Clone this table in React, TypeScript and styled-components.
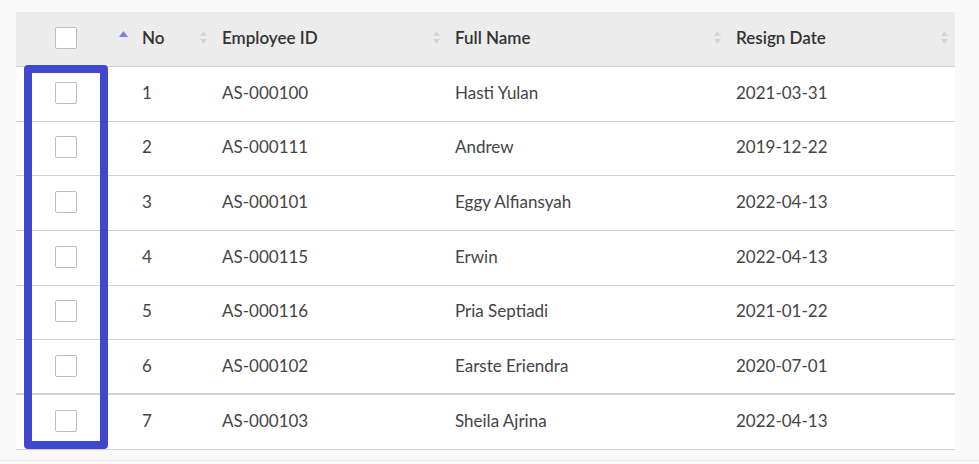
import React from "react";
import styled, { createGlobalStyle } from "styled-components";

const Global = createGlobalStyle`
  html, body { margin: 0; padding: 0; background: #f9f9f9; }
  body { font-family: Lato, "Open Sans", sans-serif; }
`;

const COLS = "100px 80px 233px 281px 1fr";

const Page = styled.div`
  width: 979px;
  height: 461px;
  box-sizing: border-box;
  padding: 12px 24px 0 16px;
  border-bottom: 1px solid #e8e8e8;
`;

const Table = styled.div`
  position: relative;
  width: 939px;
  background: #fff;
`;

const HeaderRow = styled.div`
  display: grid;
  grid-template-columns: ${COLS};
  height: 55px;
  box-sizing: border-box;
  background: #ececec;
  border-bottom: 1px solid #cfcfcf;
  align-items: center;
`;

const Row = styled.div<{ $thick?: boolean }>`
  display: grid;
  grid-template-columns: ${COLS};
  height: 54.67px;
  box-sizing: border-box;
  border-bottom: ${(p) => (p.$thick ? "2px" : "1px")} solid #d2d2d2;
  align-items: center;
`;

const CheckCell = styled.div`
  display: flex;
  justify-content: center;
  align-items: center;
`;

const Checkbox = styled.span`
  display: block;
  width: 22px;
  height: 22px;
  box-sizing: border-box;
  border: 1px solid #bdbdbd;
  border-radius: 2px;
  background: #fff;
  margin-top: -2px;
`;

const HeadCell = styled.div<{ $last?: boolean }>`
  display: flex;
  align-items: center;
  padding-left: 3px;
  padding-right: ${(p) => (p.$last ? "6px" : "0")};
  padding-bottom: 3px;
  box-sizing: border-box;
  font-size: 17px;
  font-weight: 600;
  color: #333;
  height: 100%;
`;

const Label = styled.span`
  margin-left: 14px;
  flex: 1;
  white-space: nowrap;
`;

const Cell = styled.div`
  padding-left: 26px;
  padding-bottom: 3px;
  font-size: 17px;
  color: #444;
  white-space: nowrap;
`;

const Highlight = styled.div`
  position: absolute;
  left: 8px;
  top: 53px;
  width: 84px;
  height: 384px;
  box-sizing: border-box;
  border: 8px solid #3f48cc;
  border-radius: 4px;
  pointer-events: none;
`;

const SortIcon = ({ active }: { active?: boolean }) => (
  <svg width="9" height="17" viewBox="0 0 9 17" style={{ flex: "none" }}>
    {active ? (
      <path d="M4.5 2 L9 8 L0 8 Z" fill="#7b80e6" />
    ) : (
      <>
        <path d="M4.5 2 L8 7 L1 7 Z" fill="#d4d4d4" />
        <path d="M4.5 15 L8 10 L1 10 Z" fill="#d4d4d4" />
      </>
    )}
  </svg>
);

const data = [
  ["1", "AS-000100", "Hasti Yulan", "2021-03-31"],
  ["2", "AS-000111", "Andrew", "2019-12-22"],
  ["3", "AS-000101", "Eggy Alfiansyah", "2022-04-13"],
  ["4", "AS-000115", "Erwin", "2022-04-13"],
  ["5", "AS-000116", "Pria Septiadi", "2021-01-22"],
  ["6", "AS-000102", "Earste Eriendra", "2020-07-01"],
  ["7", "AS-000103", "Sheila Ajrina", "2022-04-13"],
];

export default function App() {
  return (
    <>
      <Global />
      <Page>
        <Table>
          <HeaderRow>
            <CheckCell>
              <Checkbox />
            </CheckCell>
            <HeadCell>
              <SortIcon active />
              <Label>No</Label>
            </HeadCell>
            <HeadCell>
              <SortIcon />
              <Label>Employee ID</Label>
            </HeadCell>
            <HeadCell>
              <SortIcon />
              <Label>Full Name</Label>
            </HeadCell>
            <HeadCell $last>
              <SortIcon />
              <Label>Resign Date</Label>
              <SortIcon />
            </HeadCell>
          </HeaderRow>
          {data.map((r, i) => (
            <Row key={r[0]} $thick={i === 5}>
              <CheckCell>
                <Checkbox />
              </CheckCell>
              {r.map((v, j) => (
                <Cell key={j}>{v}</Cell>
              ))}
            </Row>
          ))}
          <Highlight />
        </Table>
      </Page>
    </>
  );
}
